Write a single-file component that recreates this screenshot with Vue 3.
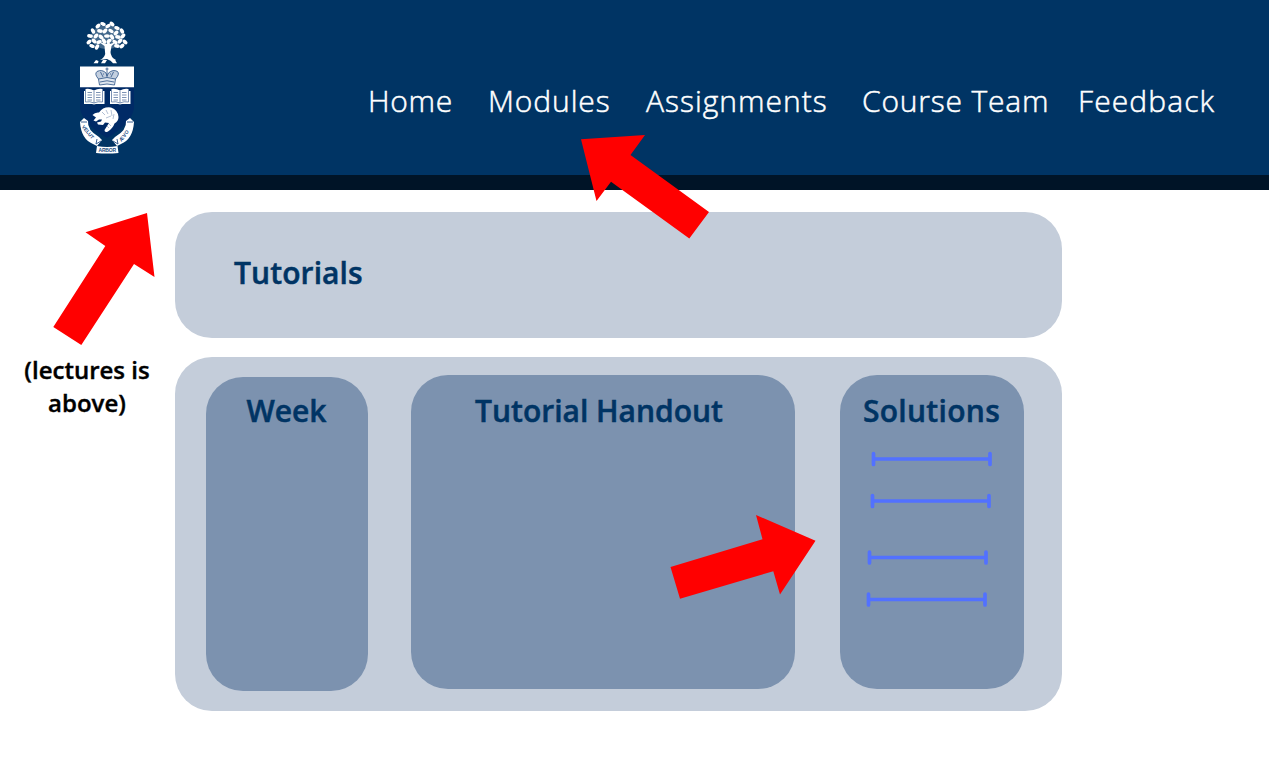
<script setup>
const links = [
  { label: 'Home', key: 'home' },
  { label: 'Modules', key: 'modules' },
  { label: 'Assignments', key: 'assignments' },
  { label: 'Course Team', key: 'team' },
  { label: 'Feedback', key: 'feedback' },
]

// Leaves of the tree on the crest: x, y, rotation
const leaves = [
  [103, 24, 20], [108, 26, -30], [112, 24, 40], [98, 26, -40], [117, 28, 20],
  [93, 31, 60], [100, 31, 10], [105, 31, -50], [111, 31, 30], [116, 33, -40], [122, 31, 60],
  [90, 36, 10], [96, 36, -50], [101, 37, 40], [107, 36, 0], [112, 37, 60], [118, 37, 10], [123, 36, -50],
  [89, 42, -40], [94, 41, 40], [99, 42, -20], [104, 41, 60], [109, 41, -30], [115, 42, 30], [120, 41, -50], [125, 42, 40],
  [92, 46, 20], [97, 47, -60], [117, 46, 10], [122, 46, -40],
]

// Measuring bars: left x, y, right x
const bars = [
  [873.5, 459, 990],
  [872.5, 501, 989],
  [869.5, 557.5, 986],
  [868.5, 599.5, 985],
]

const arrows = [
  '581,139.3 645,135 630.5,155 709,212 689.3,238.5 611,181.7 596.5,201',
  '147,213 154.5,277 134,264 81.3,345 53.3,327 105.3,246 85.5,232.3',
  '815.5,540.7 780,594.5 773.3,571.3 680,598.7 670.5,567 762.5,539.3 756,515',
]
</script>

<template>
  <div class="page">
    <header class="header">
      <svg class="crest" viewBox="76 18 62 140" width="62" height="140">
        <g fill="#fff">
          <ellipse cx="107" cy="37" rx="16" ry="12" opacity=".25" />
          <ellipse v-for="(l, i) in leaves" :key="i" :cx="l[0]" :cy="l[1]" rx="2.9" ry="1.8" :transform="`rotate(${l[2]} ${l[0]} ${l[1]})`" />
          <path d="M104.500 46 105.200 54Q104 58 100 60L107 59 113 62 116 60Q110.500 57 110.500 52L111.500 46 116 42 110 44 108 38 107 44 99 42Z" />
          <path d="M93.500 63.300 96 60 98.500 61 98 63.300ZM101 63.300 103 60 107 60 105 63.300ZM111 61 115 60 117 63.300 113 63.300Z" />
        </g>
        <path d="M80 87H134V108Q132 123 107 138Q82 123 80 108Z" fill="#002a66" />
        <path d="M80 66.500H134V87.300H80Z" fill="#fff" />
        <g fill="none" stroke="#3c6090" stroke-width=".9">
          <path d="M98.500 79Q94 74 97 71.500Q102 69 106 73L107 76 108.500 73Q113 69 117.500 71.500Q120 74 115.500 79" fill="#c3cfdf" />
          <path d="M98.500 79Q107 76 115.500 79L114.500 85Q107 83 99.500 85Z" fill="#dfe6ef" />
          <path d="M107 67.500V77M105.500 69H108.500M100.500 72 103 77M113.500 72 111 77M100 82Q107 79.500 114 82M103 74H104M110 74H111" />
        </g>
        <g v-for="x in [84, 110]" :key="x" :transform="`translate(${x} 89)`">
          <path d="M0 2H1.500V0Q6-.8 10 1.500Q14-.8 18.500 0V2H20.500V15H12L10 15.500 8 15H0Z" fill="#fff" />
          <path d="M10 2V14M1.500 2V13Q6 12 10 14Q14 12 18.500 13V2M3.500 3.500H8M3.500 6H8M3.500 8.500H8M3.500 11H8M12 3.500H16.500M12 6H16.500M12 8.500H16.500M12 11H16.500" fill="none" stroke="#6d85aa" stroke-width=".9" />
        </g>
        <path d="M92.500 115Q95 112 99 112.500Q103 106.500 111 107.500Q118 110 118.500 117Q118.500 121 114.500 123.500Q113 128 108 131.500Q104.500 133 104.500 130L109 123 105 122.500 103 125 98 124.500 97 122.500 101 121.500 102 119.500 99 119.500 96 121.500 93.500 120.500 96 117.500Z" fill="#fff" />
        <path d="M102 112 105 115M106 110 108 114M111 110 112 116M106 118 111 116M114 114 113 119M107 126 109 128M109 124 111 126" stroke="#9fb0ca" stroke-width=".8" />
        <g fill="#fff">
          <path d="M80 122 84 118 88 121Q87 130 99 137L102 140 97 146 93 144Q81 139 80 122Z" />
          <path d="M134 122 130 118 126 121Q127 130 115 137L112 140 117 146 121 144Q133 139 134 122Z" />
          <path d="M97 146Q107 148 117.500 146L118.500 153Q107 154 96 153Z" />
        </g>
        <g fill="none" stroke="#234d83" stroke-width=".9">
          <path d="M97 139 96 144 101 141M117 139 118 144 113 141M81 122 87 122M127 122 133 122" />
        </g>
        <text class="motto" transform="translate(81.500 127) rotate(50)" textLength="16">VELUT</text>
        <text class="motto" transform="translate(121.500 142) rotate(-54)" textLength="13">ÆVO</text>
        <text class="motto" x="98.500" y="152" textLength="17.500">ARBOR</text>
      </svg>
      <nav class="nav">
        <a v-for="link in links" :key="link.key" :class="link.key">{{ link.label }}</a>
      </nav>
    </header>

    <main class="body">
      <aside class="note">(lectures is<br />above)</aside>
      <div class="content">
        <section class="panel title-panel"><h1>Tutorials</h1></section>
        <section class="panel columns">
          <div class="card week"><h2>Week</h2></div>
          <div class="card handout"><h2>Tutorial Handout</h2></div>
          <div class="card solutions"><h2>Solutions</h2></div>
        </section>
      </div>
    </main>

    <svg class="overlay" viewBox="0 0 1269 768" width="1269" height="768">
      <g fill="none" stroke="#5271ff" stroke-width="3.700" stroke-linecap="round">
        <path v-for="(b, i) in bars" :key="i" :d="`M${b[0]} ${b[1]}H${b[2]}M${b[0]} ${b[1] - 5.5}v11M${b[2]} ${b[1] - 5.5}v11`" />
      </g>
      <polygon v-for="a in arrows" :key="a" :points="a" fill="#ff0000" />
    </svg>
  </div>
</template>

<style>
body {
  margin: 0;
  background: #fff;
}
</style>

<style scoped>
.page {
  position: relative;
  box-sizing: border-box;
  width: 1269px;
  height: 768px;
  overflow: hidden;
  font-family: 'Open Sans', 'Noto Sans', sans-serif;
}
.header {
  display: flex;
  box-sizing: border-box;
  height: 190px;
  padding: 18px 0 0 76px;
  border-bottom: 15px solid #001427;
  background: #003464;
}
.crest {
  flex: none;
}
.motto {
  font: bold 5px 'Liberation Sans', sans-serif;
  fill: #234d83;
}
.nav {
  display: flex;
  margin: 62px 0 0 230px;
  color: #fff;
  font-size: 30px;
  font-weight: 300;
  line-height: 42px;
  white-space: nowrap;
  -webkit-text-stroke: 0.5px #fff;
}
.nav a {
  flex: none;
}
.home { width: 120px; letter-spacing: 0.7px; }
.modules { width: 158px; letter-spacing: 0.9px; }
.assignments { width: 216px; letter-spacing: 1px; }
.team { width: 216px; letter-spacing: 0.8px; }
.feedback { letter-spacing: 1.100px; }
.body {
  display: flex;
}
.note {
  flex: none;
  box-sizing: border-box;
  width: 174px;
  margin-right: 1px;
  padding-top: 164px;
  color: #000;
  font-size: 24px;
  font-weight: 600;
  line-height: 32.500px;
  text-align: center;
  -webkit-text-stroke: 0.4px #000;
}
.content {
  display: flex;
  flex-direction: column;
  gap: 19px;
  width: 887px;
  padding-top: 21.500px;
}
.panel {
  box-sizing: border-box;
  border-radius: 37px;
  background: #c4cdda;
}
.title-panel {
  height: 126.500px;
  padding: 40px 59px;
}
h1,
h2 {
  margin: 0;
  color: #003464;
  font-size: 30px;
  font-weight: 600;
  line-height: 42px;
  white-space: nowrap;
  -webkit-text-stroke: 0.5px #003464;
}
h1 {
  letter-spacing: 0.1px;
}
.columns {
  display: flex;
  align-items: flex-start;
  height: 354px;
  padding: 18px 38px 0 30.500px;
}
.card {
  box-sizing: border-box;
  height: 313.500px;
  padding-top: 15px;
  border-radius: 37px;
  background: #7c92af;
  text-align: center;
}
.week {
  width: 162px;
  margin: 2px 43px 0 0;
  padding-top: 13px;
}
.handout {
  width: 384px;
  margin-right: 45px;
  padding-right: 7px;
}
.solutions {
  width: 184px;
}
.solutions h2 {
  letter-spacing: 0.3px;
}
.overlay {
  position: absolute;
  inset: 0;
  pointer-events: none;
}
</style>
